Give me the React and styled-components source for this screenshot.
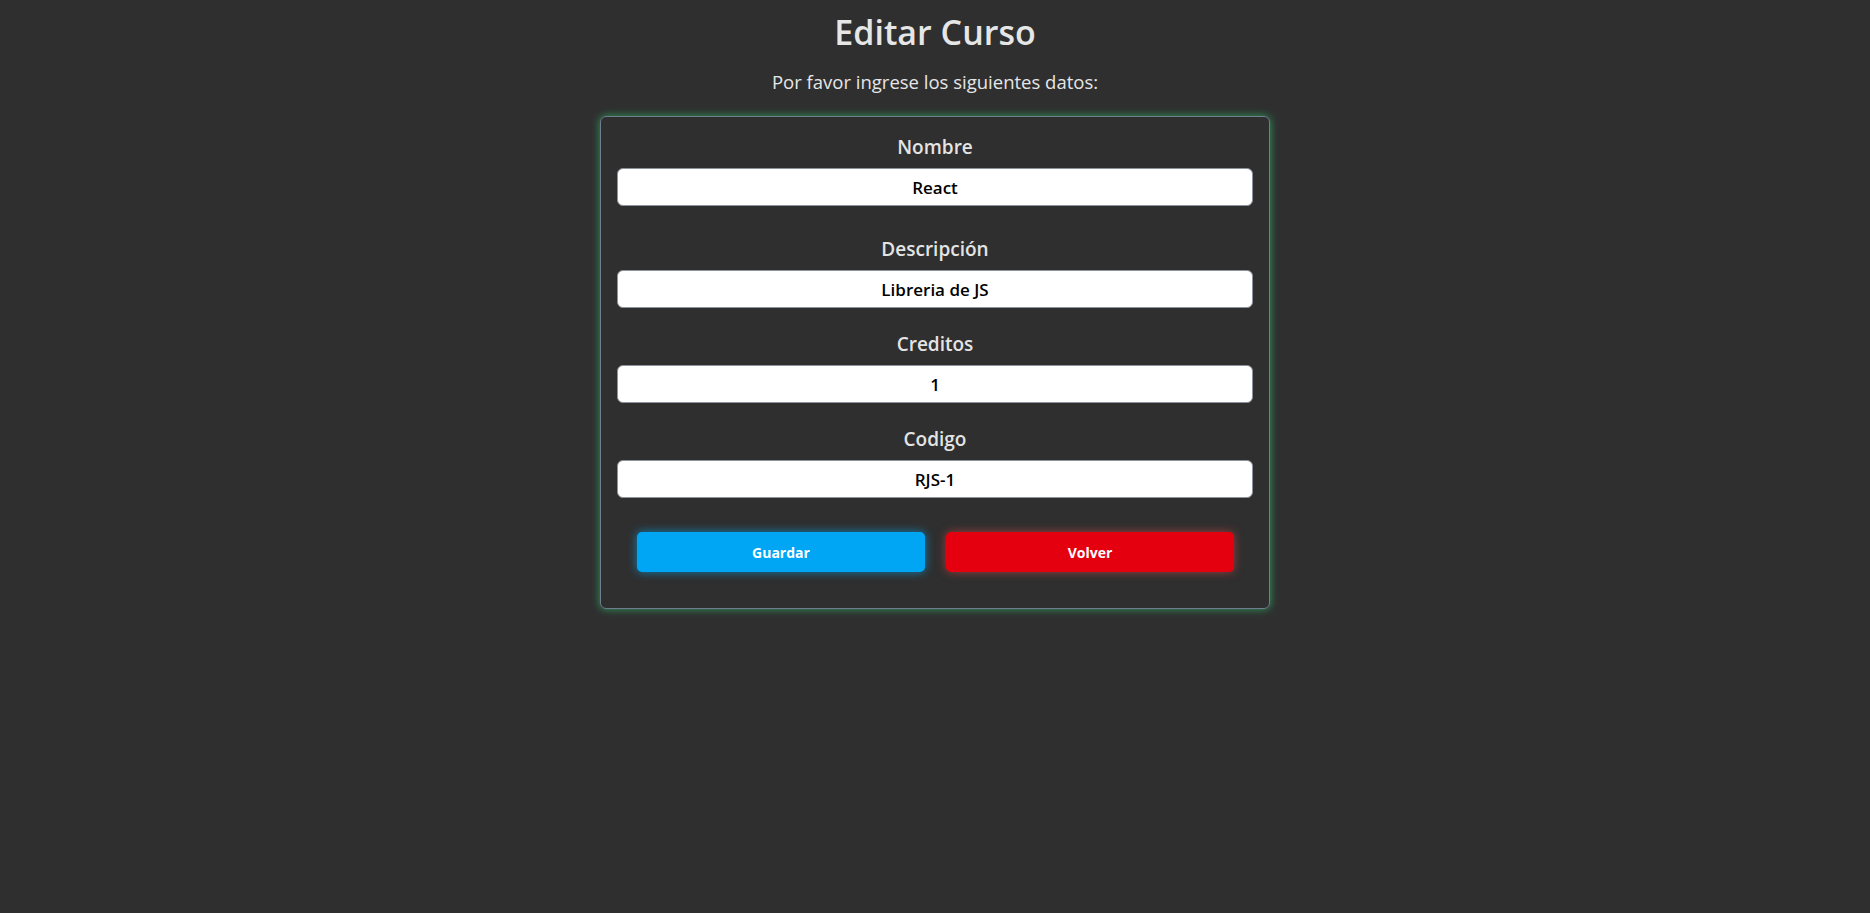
import React, { useState } from 'react';
import styled, { createGlobalStyle } from 'styled-components';

const GlobalStyle = createGlobalStyle`
  body {
    margin: 0;
    background: #2f2f2f;
    font-family: "Open Sans", "Noto Sans", sans-serif;
    color: #e4e4e4;
  }
`

const Page = styled.div`
  min-height: 913px;
  display: flex;
  flex-direction: column;
  align-items: center;
`

const Title = styled.h1`
  margin: 0;
  padding-top: 12px;
  font-size: 34px;
  line-height: 40px;
  font-weight: 600;
  color: #e6e6e6;
`

const Subtitle = styled.p`
  margin: 18px 0 22px;
  font-size: 18.5px;
  line-height: 24px;
  font-weight: 400;
  color: #e6e6e6;
`

const Card = styled.form`
  box-sizing: border-box;
  width: 670px;
  padding: 15px 16px 36px;
  border: 1px solid #6f7d8c;
  border-radius: 6px;
  box-shadow: 0 0 8px rgba(46, 204, 113, 0.7);
`

const Field = styled.div`
  display: flex;
  flex-direction: column;
  margin-bottom: ${(p) => (p.$wide ? '28px' : '21px')};
`

const Label = styled.label`
  text-align: center;
  font-size: 19px;
  line-height: 30px;
  font-weight: 600;
  color: #e4e4e4;
  margin-bottom: 6px;
`

const Input = styled.input`
  box-sizing: border-box;
  height: 38px;
  width: 100%;
  border: 1px solid #8d939c;
  border-radius: 6px;
  background: #fff;
  text-align: center;
  font-family: "Open Sans", "Noto Sans", sans-serif;
  font-size: 17px;
  font-weight: 600;
  color: #000;
  outline: none;
`

const Actions = styled.div`
  display: flex;
  gap: 21px;
  padding: 0 19px 0 20px;
  margin-top: 34px;
`

const Button = styled.button`
  flex: 1;
  height: 40px;
  border: none;
  border-radius: 5px;
  font-family: "Open Sans", "Noto Sans", sans-serif;
  font-size: 14px;
  font-weight: 700;
  color: #fff;
  background: ${(p) => (p.$danger ? '#e5000f' : '#00a6f3')};
  box-shadow: 0 0 10px ${(p) => (p.$danger ? 'rgba(229, 70, 70, 0.6)' : 'rgba(0, 166, 243, 0.7)')};
  cursor: pointer;
`

const fields = [
  { name: 'nombre', label: 'Nombre', value: 'React' },
  { name: 'descripcion', label: 'Descripción', value: 'Libreria de JS' },
  { name: 'creditos', label: 'Creditos', value: '1' },
  { name: 'codigo', label: 'Codigo', value: 'RJS-1' },
];

const App = () => {
  const [values, setValues] = useState(
    Object.fromEntries(fields.map((f) => [f.name, f.value]))
  );

  return (
    <Page>
      <GlobalStyle />
      <Title>Editar Curso</Title>
      <Subtitle>Por favor ingrese los siguientes datos:</Subtitle>
      <Card onSubmit={(e) => e.preventDefault()}>
        {fields.map((f, i) => (
          <Field key={f.name} $wide={i === 0}>
            <Label htmlFor={f.name}>{f.label}</Label>
            <Input
              id={f.name}
              name={f.name}
              value={values[f.name]}
              onChange={({ target }) => setValues({ ...values, [f.name]: target.value })}
            />
          </Field>
        ))}
        <Actions>
          <Button type="submit">Guardar</Button>
          <Button type="button" $danger>Volver</Button>
        </Actions>
      </Card>
    </Page>
  );
};

export default App;
